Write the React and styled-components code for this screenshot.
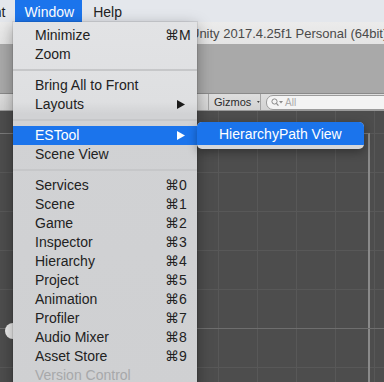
import React from 'react'
import styled, { createGlobalStyle } from 'styled-components'

const GlobalStyle = createGlobalStyle`
    html, body {
        margin: 0;
        padding: 0;
        background: #4d4d4d;
        overflow: hidden;
    }
`

const Screen = styled.div`
    position: relative;
    width: 384px;
    height: 382px;
    overflow: hidden;
    display: flex;
    flex-direction: column;
    font-family: "Liberation Sans", "DejaVu Sans", sans-serif;
    color: #222;
`

const MenuBar = styled.nav`
    height: 22px;
    flex-shrink: 0;
    display: flex;
    align-items: stretch;
    background: #e4e7ec;
    margin-left: -76px;
`

const MenuBarItem = styled.div`
    display: flex;
    align-items: center;
    padding: 1px 8px 0 9px;
    margin-right: 2px;
    font-size: 14px;
    white-space: nowrap;
    background: ${props => props.$active ? '#1b74ec' : 'transparent'};
    color: ${props => props.$active ? '#fff' : '#222'};
`

const TitleBar = styled.div`
    height: 22px;
    flex-shrink: 0;
    display: flex;
    align-items: center;
    padding-left: 190px;
    background: linear-gradient(#ebebeb, #e4e4e4);
    font-size: 13px;
    color: #4a4a4a;
    white-space: nowrap;
`

const ToolArea = styled.div`
    height: 49px;
    flex-shrink: 0;
    background: #a9a9a9;
    border-bottom: 1px solid #8a8a8a;
`

const Toolbar = styled.div`
    height: 16px;
    flex-shrink: 0;
    display: flex;
    align-items: center;
    padding-left: 208px;
    background: linear-gradient(#dedede, #d2d2d2);
    border-bottom: 1px solid #9a9a9a;
`

const ToolButton = styled.div`
    height: 16px;
    width: 53px;
    box-sizing: border-box;
    display: flex;
    align-items: center;
    gap: 6px;
    padding-left: 5px;
    border-left: 1px solid #a4a4a4;
    border-right: 1px solid #a4a4a4;
    font-size: 11px;
    color: #2a2a2a;
`

const SearchField = styled.div`
    margin-left: 5px;
    height: 13px;
    width: 130px;
    flex-shrink: 0;
    display: flex;
    align-items: center;
    gap: 2px;
    padding-left: 4px;
    border: 1px solid #9c9c9c;
    border-radius: 7px 0 0 7px;
    background: #f4f4f4;
    font-size: 10px;
    color: #a9a9a9;
`

const SceneView = styled.div`
    position: relative;
    flex: 1;
    background-color: #4d4d4d;
    background-image:
        linear-gradient(to right, #585858 1px, transparent 1px),
        linear-gradient(to bottom, #585858 1px, transparent 1px);
    background-size: 39px 39px;
    background-position: 23px 22px;
`

const SceneFrame = styled.div`
    position: absolute;
    left: -10px;
    top: 22px;
    width: 378px;
    height: 300px;
    border-top: 1px solid #7a7a7a;
    border-right: 2px solid #8a8a8a;
`

const MajorLine = styled.div`
    position: absolute;
    left: 0;
    right: 0;
    top: 217px;
    height: 1px;
    background: #6e6e6e;
`

const Handle = styled.div`
    position: absolute;
    left: 5px;
    top: 212px;
    width: 16px;
    height: 16px;
    border-radius: 50%;
    background: #ececec;
`

const Menu = styled.div`
    position: absolute;
    left: 13px;
    top: 22px;
    width: 184px;
    padding-top: 4px;
    padding-bottom: 6px;
    background: linear-gradient(#e2e3e5 0, #dedfe1 80px, #d1d2d4 92px, #cfd0d2 100%);
    box-shadow: 0 4px 14px rgba(0, 0, 0, 0.35), 0 0 0 1px rgba(0, 0, 0, 0.08);
`

const MenuItem = styled.div`
    height: 19px;
    display: grid;
    grid-template-columns: 130px 1fr;
    align-items: center;
    padding-left: 22px;
    font-size: 14px;
    line-height: 19px;
    white-space: nowrap;
    background: ${props => props.$highlighted ? '#1b74ec' : 'transparent'};
    color: ${props => props.$highlighted ? '#fff' : props.$disabled ? '#a7a8aa' : '#222'};
`

const Shortcut = styled.span`
    display: flex;
    align-items: center;
    padding-left: ${props => props.$arrow ? '12px' : '0'};
`

const Separator = styled.div`
    height: 12px;
    display: flex;
    align-items: center;

    &::after {
        content: '';
        flex: 1;
        height: 2px;
        background: #c6c7c9;
    }
`

const SubMenu = styled.div`
    position: absolute;
    left: 197px;
    top: 122px;
    width: 167px;
    padding-bottom: 4px;
    border-radius: 5px;
    overflow: hidden;
    background: #d6d7d9;
    box-shadow: 0 3px 10px rgba(0, 0, 0, 0.35);
`

const SubMenuItem = styled.div`
    height: 23px;
    display: flex;
    align-items: center;
    padding: 1px 0 0 22px;
    box-sizing: border-box;
    font-size: 14px;
    color: #fff;
    background: #1b74ec;
`

const Arrow = ({ color }) => (
    <svg width="8" height="9" viewBox="0 0 8 9">
        <polygon points="0,0 8,4.5 0,9" fill={color} />
    </svg>
)

const SearchIcon = () => (
    <svg width="12" height="9" viewBox="0 0 12 9">
        <circle cx="3.5" cy="3.5" r="2.6" fill="none" stroke="#8a8a8a" strokeWidth="1" />
        <line x1="5.4" y1="5.4" x2="7.4" y2="7.6" stroke="#8a8a8a" strokeWidth="1.2" />
        <polygon points="8,3 12,3 10,5.5" fill="#8a8a8a" />
    </svg>
)

const menuItems = [
    { label: 'Minimize', shortcut: '⌘M' },
    { label: 'Zoom' },
    { sep: true },
    { label: 'Bring All to Front' },
    { label: 'Layouts', submenu: true },
    { sep: true },
    { label: 'ESTool', submenu: true, highlighted: true },
    { label: 'Scene View' },
    { sep: true },
    { label: 'Services', shortcut: '⌘0' },
    { label: 'Scene', shortcut: '⌘1' },
    { label: 'Game', shortcut: '⌘2' },
    { label: 'Inspector', shortcut: '⌘3' },
    { label: 'Hierarchy', shortcut: '⌘4' },
    { label: 'Project', shortcut: '⌘5' },
    { label: 'Animation', shortcut: '⌘6' },
    { label: 'Profiler', shortcut: '⌘7' },
    { label: 'Audio Mixer', shortcut: '⌘8' },
    { label: 'Asset Store', shortcut: '⌘9' },
    { label: 'Version Control', disabled: true },
]

export default function App() {
    return (
        <Screen>
            <GlobalStyle />
            <MenuBar>
                <MenuBarItem>Component</MenuBarItem>
                <MenuBarItem $active>Window</MenuBarItem>
                <MenuBarItem>Help</MenuBarItem>
            </MenuBar>
            <TitleBar>Unity 2017.4.25f1 Personal (64bit) - Untitled - ESTool</TitleBar>
            <ToolArea />
            <Toolbar>
                <ToolButton>
                    Gizmos
                    <svg width="5" height="4" viewBox="0 0 5 4">
                        <polygon points="0,0 5,0 2.5,4" fill="#444" />
                    </svg>
                </ToolButton>
                <SearchField>
                    <SearchIcon />
                    All
                </SearchField>
            </Toolbar>
            <SceneView>
                <SceneFrame />
                <MajorLine />
                <Handle />
            </SceneView>

            <Menu>
                {menuItems.map((item, i) => item.sep ? (
                    <Separator key={i} />
                ) : (
                    <MenuItem key={i} $highlighted={item.highlighted} $disabled={item.disabled}>
                        <span>{item.label}</span>
                        {item.shortcut && <Shortcut>{item.shortcut}</Shortcut>}
                        {item.submenu && (
                            <Shortcut $arrow>
                                <Arrow color={item.highlighted ? '#fff' : '#1a1a1a'} />
                            </Shortcut>
                        )}
                    </MenuItem>
                ))}
            </Menu>

            <SubMenu>
                <SubMenuItem>HierarchyPath View</SubMenuItem>
            </SubMenu>
        </Screen>
    )
}
